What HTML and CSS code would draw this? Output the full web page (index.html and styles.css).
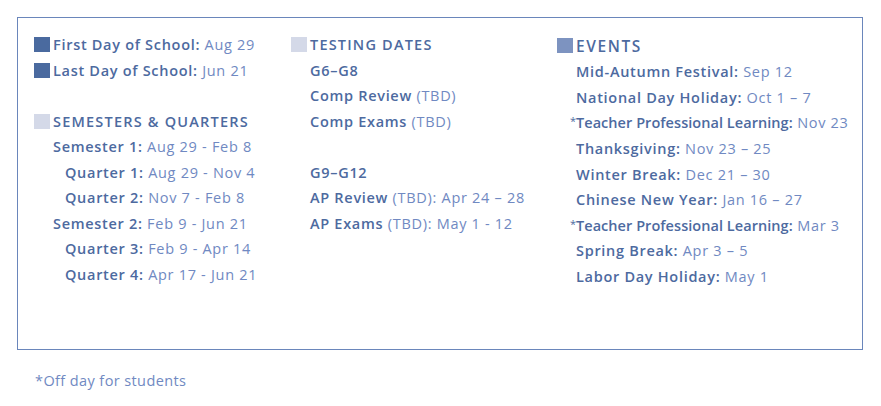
FILE: index.html
```html
<!DOCTYPE html>
<html lang="en">
<head>
<meta charset="utf-8">
<title>School Calendar Legend</title>
<link rel="stylesheet" href="styles.css">
</head>
<body>
<div class="box">
  <div class="col col-1">
    <div class="row"><span class="sq sq-dark"></span><b>First Day of School:</b>&nbsp;Aug 29</div>
    <div class="row"><span class="sq sq-dark"></span><b>Last Day of School:</b>&nbsp;Jun 21</div>
    <div class="row blank"></div>
    <div class="row"><span class="sq sq-light"></span><b class="head">SEMESTERS &amp; QUARTERS</b></div>
    <div class="row"><b>Semester 1:</b>&nbsp;Aug 29 - Feb 8</div>
    <div class="row sub"><b>Quarter 1:</b>&nbsp;Aug 29 - Nov 4</div>
    <div class="row sub"><b>Quarter 2:</b>&nbsp;Nov 7 - Feb 8</div>
    <div class="row"><b>Semester 2:</b>&nbsp;Feb 9 - Jun 21</div>
    <div class="row sub"><b>Quarter 3:</b>&nbsp;Feb 9 - Apr 14</div>
    <div class="row sub"><b>Quarter 4:</b>&nbsp;Apr 17 - Jun 21</div>
  </div>
  <div class="col col-2">
    <div class="row"><span class="sq sq-light"></span><b class="head">TESTING DATES</b></div>
    <div class="row"><b>G6–G8</b></div>
    <div class="row"><b>Comp Review</b>&nbsp;(TBD)</div>
    <div class="row"><b>Comp Exams</b>&nbsp;(TBD)</div>
    <div class="row blank"></div>
    <div class="row"><b>G9–G12</b></div>
    <div class="row"><b>AP Review</b>&nbsp;(TBD): Apr 24 – 28</div>
    <div class="row"><b>AP Exams</b>&nbsp;(TBD): May 1 - 12</div>
  </div>
  <div class="col col-3">
    <div class="row"><span class="sq sq-mid"></span><b class="head head-lg">EVENTS</b></div>
    <div class="row"><b>Mid-Autumn Festival:</b>&nbsp;Sep 12</div>
    <div class="row"><b>National Day Holiday:</b>&nbsp;Oct 1 – 7</div>
    <div class="row"><span class="star">*</span><b class="tight">Teacher Professional Learning:</b>&nbsp;Nov 23</div>
    <div class="row"><b>Thanksgiving:</b>&nbsp;Nov 23 – 25</div>
    <div class="row"><b>Winter Break:</b>&nbsp;Dec 21 – 30</div>
    <div class="row"><b>Chinese New Year:</b>&nbsp;Jan 16 – 27</div>
    <div class="row"><span class="star">*</span><b class="tight">Teacher Professional Learning:</b>&nbsp;Mar 3</div>
    <div class="row"><b>Spring Break:</b>&nbsp;Apr 3 – 5</div>
    <div class="row"><b>Labor Day Holiday:</b>&nbsp;May 1</div>
  </div>
</div>
<p class="note">*Off day for students</p>
</body>
</html>
```
FILE: styles.css
```css
html, body {
  margin: 0;
  padding: 0;
  background: #ffffff;
}
body {
  font-family: "Open Sans", "Noto Sans", sans-serif;
  font-size: 14.5px;
  letter-spacing: 0.7px;
  color: #7089c2;
}
.box {
  margin: 17px 18px 0 17px;
  height: 333px;
  box-sizing: border-box;
  border: 1px solid #6a86bb;
  padding: 14px 0 0 16px;
  display: grid;
  grid-template-columns: 257px 266px 1fr;
}
.col {
  display: flex;
  flex-direction: column;
}
.row {
  height: 25.5px;
  display: flex;
  align-items: center;
  position: relative;
  white-space: nowrap;
  padding-left: 19px;
}
.col-3 .row {
  height: 25.6px;
}
.col-3 .row:first-child {
  height: 27px;
}
.row.sub {
  padding-left: 31px;
}
b {
  font-weight: 600;
  color: #4d6a9f;
}
.head {
  font-weight: 600;
  letter-spacing: 1.2px;
}
.head-lg {
  font-size: 15.5px;
  letter-spacing: 1.6px;
}
.tight {
  letter-spacing: 0.05px;
}
.sq {
  position: absolute;
  left: 0;
  top: 50%;
  width: 16px;
  height: 15px;
  margin-top: -7.5px;
}
.sq-dark { background: #4a6a9f; }
.sq-light { background: #d4d9e8; }
.sq-mid { background: #7d93c0; }
.star {
  position: absolute;
  left: 13px;
  color: #4d6a9f;
  font-size: 11px;
  letter-spacing: 0;
  top: 3px;
}
.note {
  margin: 22px 0 0 35px;
  font-size: 14.5px;
  letter-spacing: 0.4px;
  line-height: 18px;
  color: #7089c2;
}
```
